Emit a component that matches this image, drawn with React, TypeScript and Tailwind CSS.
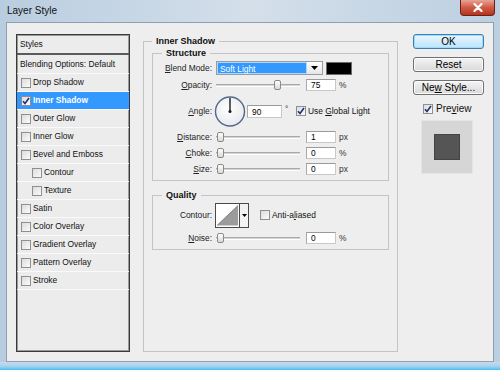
import React from "react";

function Check({ checked = false }: { checked?: boolean }) {
  return (
    <span className="w-[10px] h-[10px] shrink-0 border border-[#8e8f8f] bg-gradient-to-br from-[#dcdcdc] to-[#fbfbfb] flex items-center justify-center">
      {checked && (
        <svg width="8" height="8" viewBox="0 0 8 8">
          <path d="M1 4.2 L3 6.5 L7 1" fill="none" stroke="#1c2f7a" strokeWidth="1.6" />
        </svg>
      )}
    </span>
  );
}

function Slider({ value }: { value: number }) {
  return (
    <div className="relative w-[84px] h-[12px] flex items-center">
      <div className="w-full h-[3px] border-t border-[#a9a9a9] border-b border-b-white bg-[#d4d4d4]" />
      <div
        className="absolute top-[1px] w-[7px] h-[10px] rounded-[2px] border border-[#8a8a8a] bg-gradient-to-b from-white to-[#d8d8d8]"
        style={{ left: `${1 + value * 0.76}px` }}
      />
    </div>
  );
}

function NumInput({ v }: { v: string }) {
  return (
    <div className="w-[30px] h-[12px] bg-white border border-[#c8c8c8] border-t-[#9a9a9a] border-l-[#aaaaaa] pl-[4px] leading-[11px]">
      {v}
    </div>
  );
}

function Label({ children }: { children: React.ReactNode }) {
  return <span className="w-[50px] shrink-0 text-right text-[#222]">{children}</span>;
}

function SliderRow({ label, value, v, unit }: { label: React.ReactNode; value: number; v: string; unit: string }) {
  return (
    <div className="flex items-center h-[12px] leading-[12px]">
      <Label>{label}</Label>
      <div className="ml-[4px]">
        <Slider value={value} />
      </div>
      <div className="ml-[6px]">
        <NumInput v={v} />
      </div>
      <span className="ml-[3px] text-[#333]">{unit}</span>
    </div>
  );
}

function ListRow({
  label,
  checked = false,
  selected = false,
  indent = false,
}: {
  label: string;
  checked?: boolean;
  selected?: boolean;
  indent?: boolean;
}) {
  return (
    <div
      className={`h-[18px] border-b border-[#fafafa] flex items-center gap-[2px] ${indent ? "pl-[15px]" : "pl-[4px]"} ${
        selected ? "bg-[#3399ff] text-white font-bold" : "text-[#111]"
      }`}
    >
      <Check checked={checked} />
      <span>{label}</span>
    </div>
  );
}

function Btn({ children, primary = false }: { children: React.ReactNode; primary?: boolean }) {
  return (
    <div
      className={`w-[71px] h-[15px] rounded-[3px] border flex items-center justify-center text-[10px] leading-[13px] ${
        primary
          ? "border-[#3c7fb1] bg-gradient-to-b from-[#eaf6fd] to-[#bde4fb] shadow-[inset_0_0_0_1px_#9cdcfb]"
          : "border-[#707070] bg-gradient-to-b from-[#f4f4f4] to-[#d9d9d9] shadow-[inset_0_0_0_1px_#fcfcfc]"
      }`}
    >
      {children}
    </div>
  );
}

export default function App() {
  return (
    <div className="w-[500px] h-[370px] flex flex-col overflow-hidden bg-gradient-to-r from-[#b9cde0] via-[#d4dfea] to-[#bccfe1] font-['Liberation_Sans',Arial,sans-serif] text-[8.4px] text-black">
      {/* Title bar */}
      <div className="h-[22px] flex items-start justify-between pl-[7px] pr-[5px] shrink-0">
        <span className="mt-[5px] text-[10px] leading-[12px] text-[#111]">Layer Style</span>
        <div className="w-[35px] h-[16px] rounded-b-[4px] border border-t-0 border-[#6b2016] bg-gradient-to-b from-[#e7a293] via-[#cf5a44] to-[#b8311d] flex items-center justify-center">
          <svg width="10" height="9" viewBox="0 0 10 9">
            <path d="M1.5 1 L8.5 8 M8.5 1 L1.5 8" stroke="#ffffff" strokeWidth="2.2" strokeLinecap="round" />
          </svg>
        </div>
      </div>

      {/* Client area */}
      <div className="h-[340px] mx-[6px] border border-[#8e9fb1] bg-[#eeeeee] flex pl-[9px] pt-[11px] pb-[9px] shrink-0">
        {/* Styles list */}
        <div className="w-[114px] border border-[#3a3a3a] shadow-[inset_0_0_0_1px_#9a9a9a] bg-[#ececec] flex flex-col">
          <div className="h-[20px] border-b-2 border-[#5a5a5a] flex items-center pl-[3px] text-[#111]">Styles</div>
          <div className="h-[19px] border-b border-[#fafafa] flex items-center pl-[3px] text-[#111]">Blending Options: Default</div>
          <ListRow label="Drop Shadow" />
          <ListRow label="Inner Shadow" checked selected />
          <ListRow label="Outer Glow" />
          <ListRow label="Inner Glow" />
          <ListRow label="Bevel and Emboss" />
          <ListRow label="Contour" indent />
          <ListRow label="Texture" indent />
          <ListRow label="Satin" />
          <ListRow label="Color Overlay" />
          <ListRow label="Gradient Overlay" />
          <ListRow label="Pattern Overlay" />
          <ListRow label="Stroke" />
        </div>

        {/* Inner Shadow group */}
        <fieldset className="ml-[13px] mt-[1px] w-[255px] border border-[#c4c4c4] px-[8px] min-w-0">
          <legend className="px-[4px] font-bold text-[9px] leading-[12px] text-[#111]">Inner Shadow</legend>

          <fieldset className="mt-0 border border-[#c4c4c4] pl-[9px] pr-[8px] pb-[5px] min-w-0">
            <legend className="px-[4px] font-bold text-[9px] leading-[12px] text-[#111]">Structure</legend>

            {/* Blend mode */}
            <div className="mt-[2px] flex items-center h-[14px]">
              <Label>
                <span className="underline">B</span>lend Mode:
              </Label>
              <div className="ml-[4px] flex h-[14px] border border-[#9c9c9c]">
                <div className="w-[90px] h-full bg-[#3399ff] text-white pl-[2px] leading-[12px] border border-white/60">Soft Light</div>
                <div className="w-[15px] h-full bg-gradient-to-b from-white to-[#e6e6e6] flex items-center justify-center">
                  <svg width="7" height="4" viewBox="0 0 7 4">
                    <path d="M0 0 H7 L3.5 4 Z" fill="#000" />
                  </svg>
                </div>
              </div>
              <div className="ml-[3px] w-[26px] h-[13px] bg-black border border-[#6b6b6b]" />
            </div>

            {/* Opacity */}
            <div className="mt-[4px]">
              <SliderRow label={<><span className="underline">O</span>pacity:</>} value={75} v="75" unit="%" />
            </div>

            {/* Angle */}
            <div className="mt-[5px] flex items-center h-[31px]">
              <Label>
                <span className="underline">A</span>ngle:
              </Label>
              <svg className="ml-[2px] shrink-0" width="32" height="31" viewBox="0 0 32 31">
                <defs>
                  <radialGradient id="dg" cx="0.45" cy="0.4" r="0.7">
                    <stop offset="0" stopColor="#ffffff" />
                    <stop offset="1" stopColor="#e4e6ea" />
                  </radialGradient>
                </defs>
                <circle cx="16" cy="15.5" r="14.5" fill="url(#dg)" stroke="#54678c" strokeWidth="1.4" />
                <line x1="16" y1="15.5" x2="16" y2="2" stroke="#1a1a1a" strokeWidth="1.4" />
                <circle cx="16" cy="15.5" r="1.5" fill="#1a1a1a" />
              </svg>
              <div className="ml-[1px] w-[35px] h-[13px] bg-white border border-[#c8c8c8] border-t-[#9a9a9a] border-l-[#aaaaaa] pl-[4px] leading-[12px]">
                90
              </div>
              <span className="ml-[3px] w-[4px] text-[#333] -mt-[4px]">°</span>
              <div className="ml-[7px] flex items-center gap-[2px]">
                <Check checked />
                <span className="text-[#111]">
                  Use <span className="underline">G</span>lobal Light
                </span>
              </div>
            </div>

            <div className="mt-[4px]">
              <SliderRow label={<><span className="underline">D</span>istance:</>} value={0} v="1" unit="px" />
            </div>
            <div className="mt-[4px]">
              <SliderRow label={<><span className="underline">C</span>hoke:</>} value={0} v="0" unit="%" />
            </div>
            <div className="mt-[4px]">
              <SliderRow label={<><span className="underline">S</span>ize:</>} value={0} v="0" unit="px" />
            </div>
          </fieldset>

          <fieldset className="mt-[8px] border border-[#c4c4c4] pl-[9px] pr-[8px] pb-[5px] min-w-0">
            <legend className="px-[4px] font-bold text-[9px] leading-[12px] text-[#111]">Quality</legend>

            <div className="mt-[2px] flex items-center h-[25px]">
              <Label>Contour:</Label>
              <div className="ml-[3px] flex border border-[#4a4a4a] h-[25px]">
                <svg width="24" height="23" viewBox="0 0 24 23" className="bg-white border-r border-[#4a4a4a]">
                  <path d="M1 22 L23 1 L23 22 Z" fill="#9b9b9b" />
                  <path d="M1 22 L23 1" stroke="#6a6a6a" strokeWidth="0.8" />
                </svg>
                <div className="w-[8px] bg-[#f2f2f2] flex items-center justify-center">
                  <svg width="5" height="3" viewBox="0 0 5 3">
                    <path d="M0 0 H5 L2.5 3 Z" fill="#000" />
                  </svg>
                </div>
              </div>
              <div className="ml-[11px] flex items-center gap-[2px]">
                <Check />
                <span className="text-[#111]">
                  Anti-a<span className="underline">l</span>iased
                </span>
              </div>
            </div>

            <div className="mt-[4px]">
              <SliderRow label={<><span className="underline">N</span>oise:</>} value={0} v="0" unit="%" />
            </div>
          </fieldset>
        </fieldset>

        {/* Right column */}
        <div className="ml-[15px] w-[71px] flex flex-col">
          <Btn primary>OK</Btn>
          <div className="mt-[8px]">
            <Btn>Reset</Btn>
          </div>
          <div className="mt-[8px]">
            <Btn>
              <span>
                Ne<span className="underline">w</span> Style...
              </span>
            </Btn>
          </div>
          <div className="mt-[8px] ml-[10px] flex items-center gap-[3px] h-[11px] text-[10px]">
            <Check checked />
            <span className="text-[#111]">
              Pre<span className="underline">v</span>iew
            </span>
          </div>
          <div className="mt-[6px] ml-[8px] w-[52px] h-[54px] bg-[#d6d6d6] border border-[#e4e4e4] flex items-center justify-center">
            <div className="w-[26px] h-[26px] bg-[#555555] border border-[#444]" />
          </div>
        </div>
      </div>

      {/* Bottom frame */}
      <div className="flex-1 bg-gradient-to-b from-[#c9d9e8] via-[#a9d3ee] to-[#3fc0f0]" />
    </div>
  );
}
